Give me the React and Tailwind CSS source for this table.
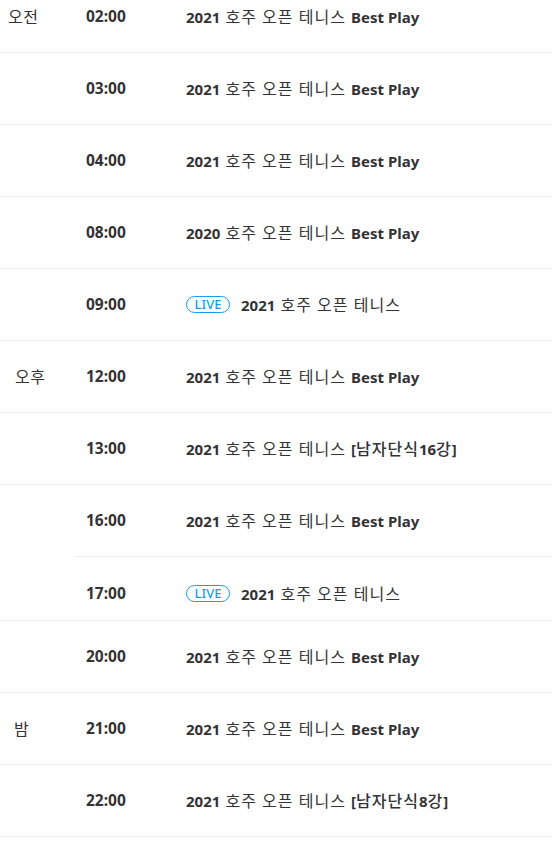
const rows = [
  { period: "오전", pl: "pl-[8px]", time: "02:00", title: ["2021", " 호주 오픈 테니스 ", "Best Play"] },
  { time: "03:00", title: ["2021", " 호주 오픈 테니스 ", "Best Play"] },
  { time: "04:00", title: ["2021", " 호주 오픈 테니스 ", "Best Play"] },
  { time: "08:00", title: ["2020", " 호주 오픈 테니스 ", "Best Play"] },
  { time: "09:00", live: true, title: ["2021", " 호주 오픈 테니스", ""] },
  { period: "오후", pl: "pl-[15px]", time: "12:00", title: ["2021", " 호주 오픈 테니스 ", "Best Play"] },
  { time: "13:00", title: ["2021", " 호주 오픈 테니스 ", "[", "남자단식", "16", "강", "]"] },
  { time: "16:00", partial: true, title: ["2021", " 호주 오픈 테니스 ", "Best Play"] },
  { time: "17:00", live: true, short: true, title: ["2021", " 호주 오픈 테니스", ""] },
  { time: "20:00", title: ["2021", " 호주 오픈 테니스 ", "Best Play"] },
  { period: "밤", pl: "pl-[14px]", time: "21:00", title: ["2021", " 호주 오픈 테니스 ", "Best Play"] },
  { time: "22:00", title: ["2021", " 호주 오픈 테니스 ", "[", "남자단식", "8", "강", "]"] },
];

function Title({ parts }) {
  return (
    <span className="whitespace-pre text-[#333]">
      {parts.map((p, i) =>
        i % 2 === 0 ? (
          <span key={i} className="text-[15px] font-bold">{p}</span>
        ) : (
          <span
            key={i}
            className={`text-[16px] tracking-[1px] ${i === 1 ? "font-normal" : "font-medium"}`}
          >
            {p}
          </span>
        )
      )}
    </span>
  );
}

function Row({ r }) {
  const content = (
    <div className={`flex items-center ${r.short ? "h-[63px] pt-[10px]" : "h-[71px]"}`}>
      <div className={`w-[86px] shrink-0 text-[16px] tracking-[0.5px] text-[#333] ${r.pl || ""}`}>
        {r.period || ""}
      </div>
      <div className="w-[100px] shrink-0 text-[15.5px] font-bold text-[#333]">{r.time}</div>
      <div className="flex items-center">
        {r.live && (
          <span className="mr-[11px] flex h-[17px] w-[44px] items-center justify-center rounded-full border border-[#1a9cf0] text-[13px] font-medium leading-none text-[#1a9cf0]">
            LIVE
          </span>
        )}
        <Title parts={r.title} />
      </div>
    </div>
  );
  if (r.partial) {
    return (
      <div>
        {content}
        <div className="ml-[75px] h-px bg-[#ebebeb]" />
      </div>
    );
  }
  return <div className="border-b border-[#ebebeb]">{content}</div>;
}

export default function App() {
  return (
    <div
      className="h-[843px] w-[552px] overflow-hidden bg-white"
      style={{ fontFamily: '"Noto Sans", "Noto Sans CJK KR", sans-serif' }}
    >
      <div className="mt-[-19px]">
        {rows.map((r, i) => (
          <Row key={i} r={r} />
        ))}
      </div>
    </div>
  );
}
